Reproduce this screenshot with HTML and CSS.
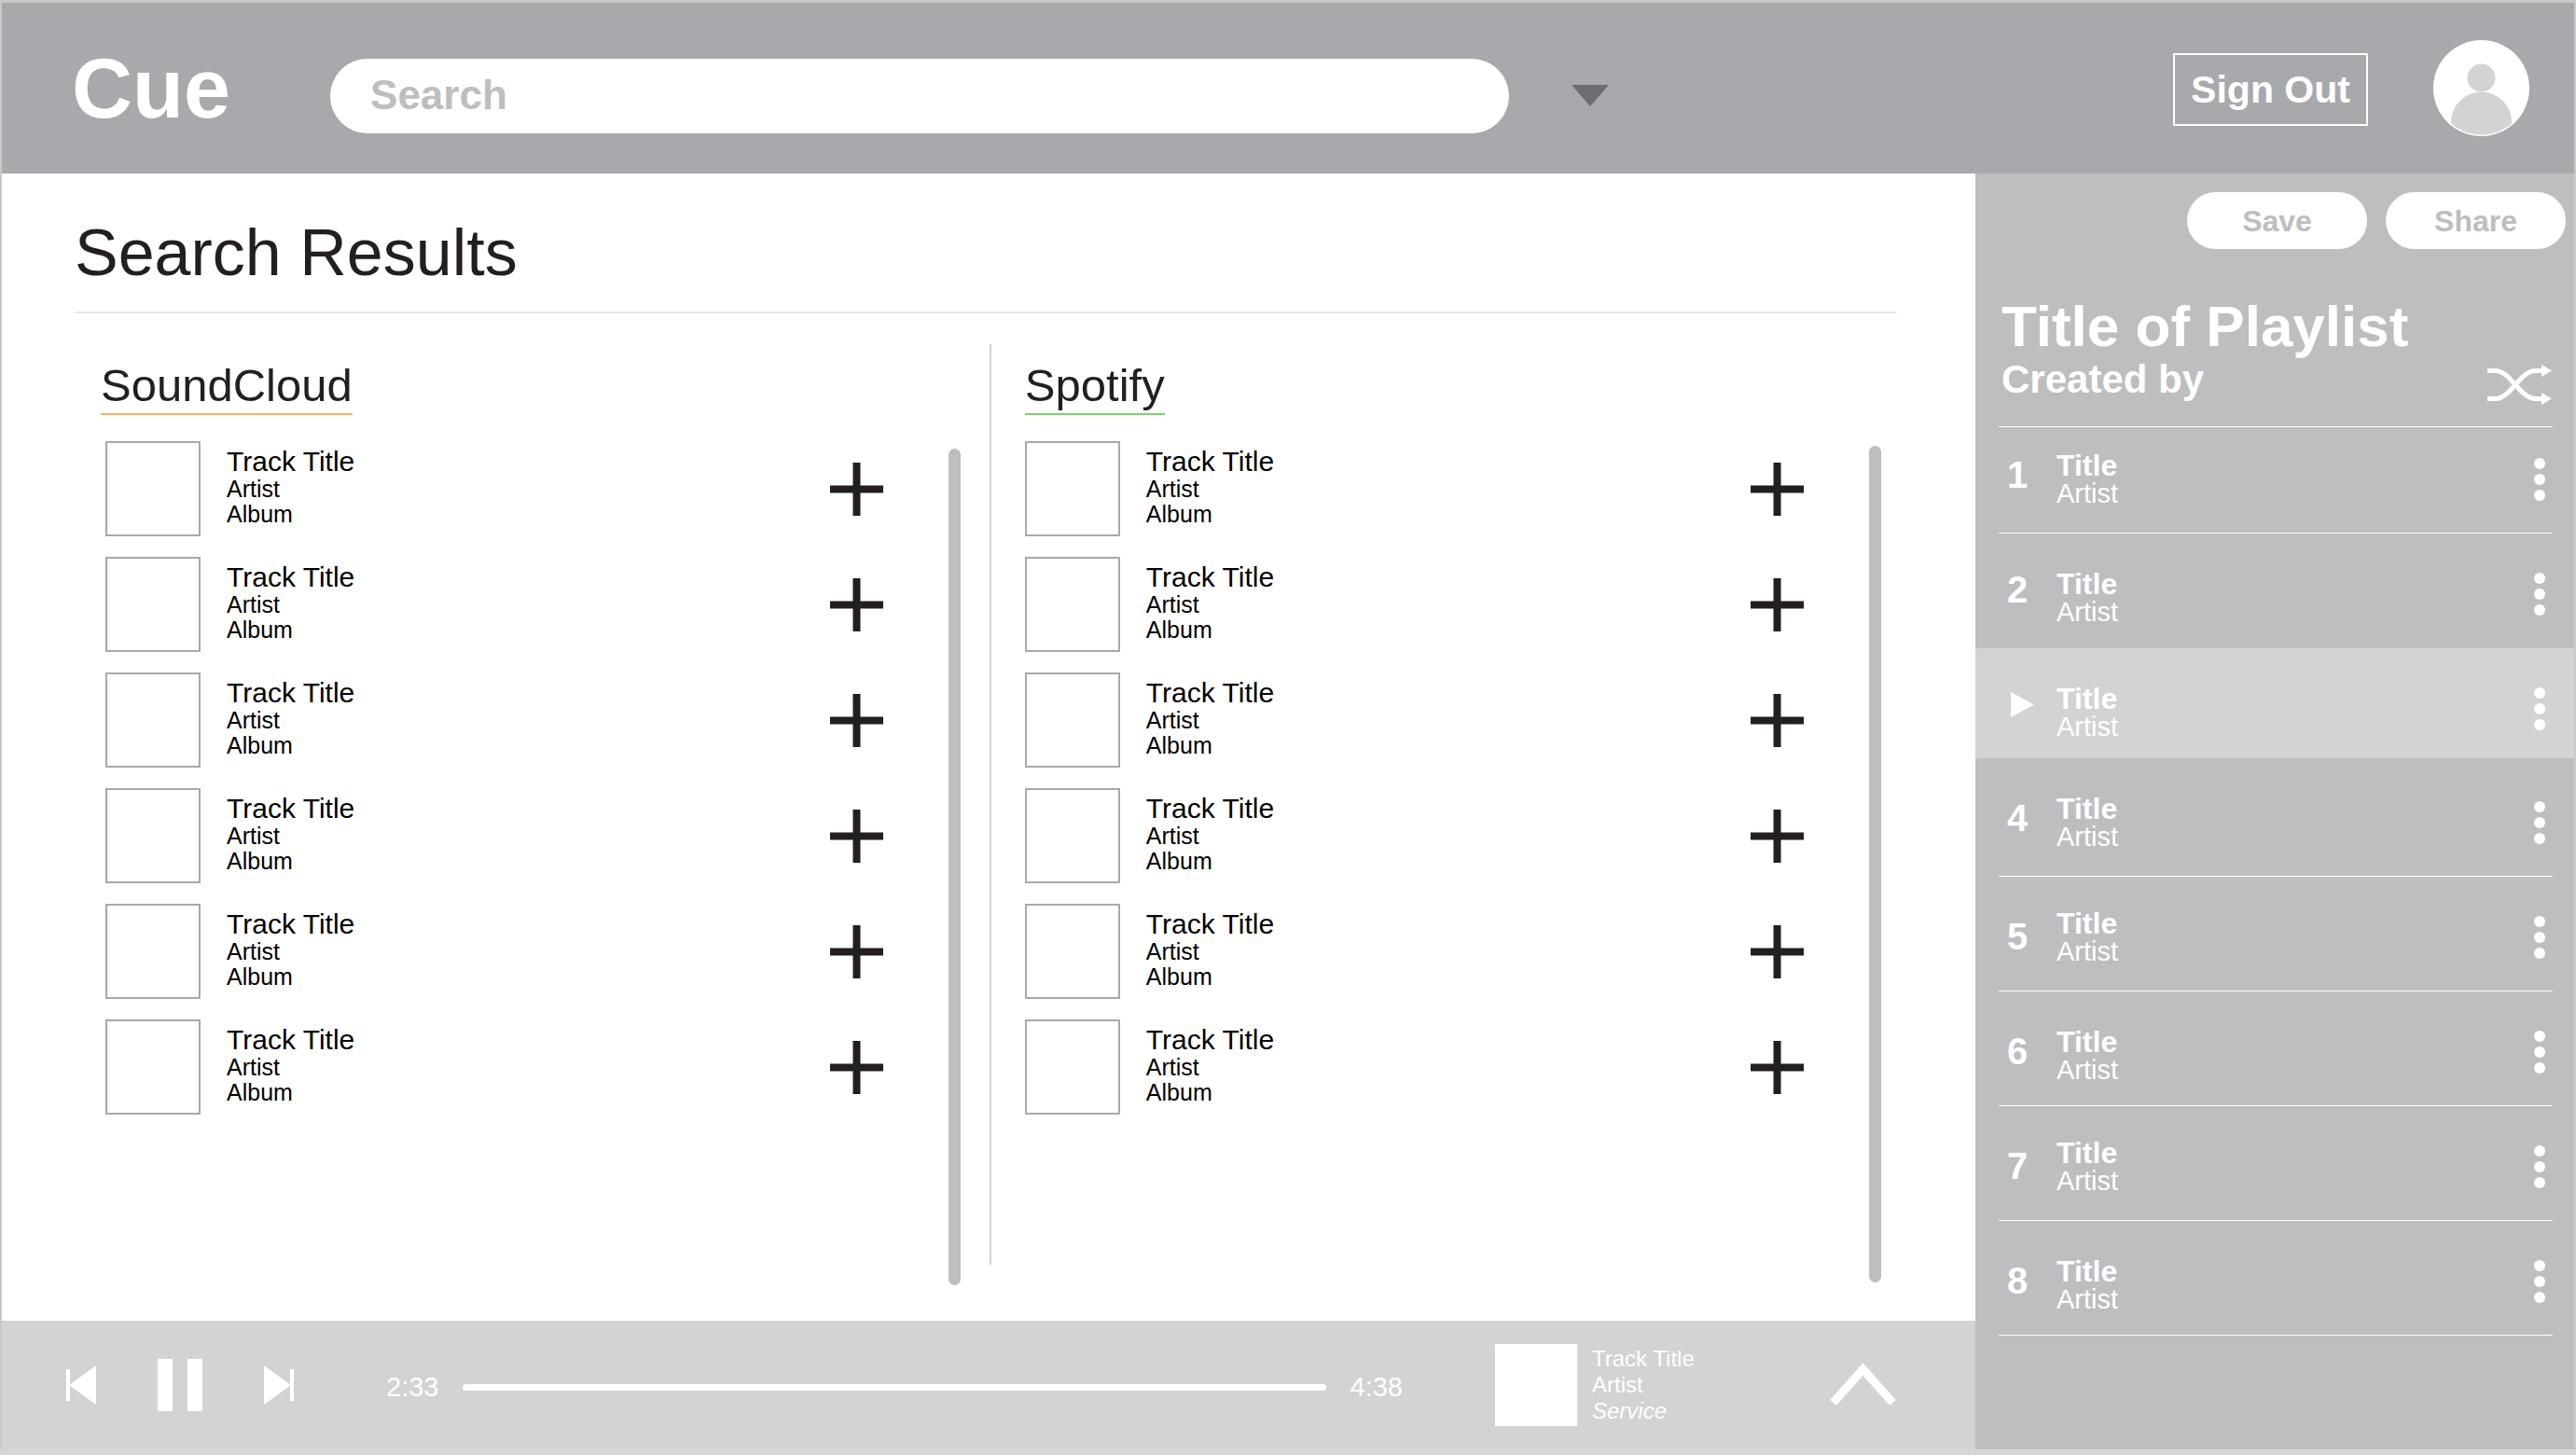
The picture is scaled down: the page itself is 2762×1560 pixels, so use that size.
FILE: index.html
```html
<!DOCTYPE html>
<html lang="en">
<head>
<meta charset="utf-8">
<meta name="viewport" content="width=device-width, initial-scale=1">
<title>Cue</title>
<link rel="stylesheet" href="styles.css">
</head>
<body>
<svg class="sprite" aria-hidden="true">
  <symbol id="plus" viewBox="0 0 57 57"><path d="M28.5 0V57M0 28.5H57" stroke="currentColor" stroke-width="8"/></symbol>
  <symbol id="dots" viewBox="0 0 12 46"><circle cx="6" cy="6" r="6"/><circle cx="6" cy="23" r="6"/><circle cx="6" cy="40" r="6"/></symbol>
</svg>
<div class="app">
  <header class="topbar">
    <a class="logo" href="#">Cue</a>
    <form class="search" role="search">
      <input class="search-input" type="text" placeholder="Search" aria-label="Search">
      <button class="icon-button" type="button" aria-label="Search options">
        <svg class="icon-caret" width="40" height="23" viewBox="0 0 40 23"><path d="M0 0H40L20 23Z"/></svg>
      </button>
    </form>
    <button class="sign-out" type="button">Sign Out</button>
    <a class="avatar" href="#" aria-label="Profile">
      <svg width="103" height="103" viewBox="0 0 103 103">
        <defs><clipPath id="face"><circle cx="51.5" cy="51.5" r="50"/></clipPath></defs>
        <circle cx="51.5" cy="51.5" r="51.5" fill="#fff"/>
        <g fill="#d1d3d4" clip-path="url(#face)"><circle cx="51.5" cy="40.500" r="15"/><path d="M19 103V88a32.500 32.500 0 0 1 65 0V103Z"/></g>
      </svg>
    </a>
  </header>

  <main class="results">
    <h1 class="page-title">Search Results</h1>
    <div class="sources">
      <section class="source source-soundcloud">
        <h2 class="source-name">SoundCloud</h2>
        <div class="source-body">
          <ul class="tracks">
            <li class="track"><div class="cover"></div><div class="track-info"><p class="track-title">Track Title</p><p>Artist</p><p>Album</p></div><button class="icon-button" type="button" aria-label="Add track"><svg width="57" height="57"><use href="#plus"/></svg></button></li>
            <li class="track"><div class="cover"></div><div class="track-info"><p class="track-title">Track Title</p><p>Artist</p><p>Album</p></div><button class="icon-button" type="button" aria-label="Add track"><svg width="57" height="57"><use href="#plus"/></svg></button></li>
            <li class="track"><div class="cover"></div><div class="track-info"><p class="track-title">Track Title</p><p>Artist</p><p>Album</p></div><button class="icon-button" type="button" aria-label="Add track"><svg width="57" height="57"><use href="#plus"/></svg></button></li>
            <li class="track"><div class="cover"></div><div class="track-info"><p class="track-title">Track Title</p><p>Artist</p><p>Album</p></div><button class="icon-button" type="button" aria-label="Add track"><svg width="57" height="57"><use href="#plus"/></svg></button></li>
            <li class="track"><div class="cover"></div><div class="track-info"><p class="track-title">Track Title</p><p>Artist</p><p>Album</p></div><button class="icon-button" type="button" aria-label="Add track"><svg width="57" height="57"><use href="#plus"/></svg></button></li>
            <li class="track"><div class="cover"></div><div class="track-info"><p class="track-title">Track Title</p><p>Artist</p><p>Album</p></div><button class="icon-button" type="button" aria-label="Add track"><svg width="57" height="57"><use href="#plus"/></svg></button></li>
          </ul>
          <div class="scrollbar"></div>
        </div>
      </section>
      <div class="divider"></div>
      <section class="source source-spotify">
        <h2 class="source-name">Spotify</h2>
        <div class="source-body">
          <ul class="tracks">
            <li class="track"><div class="cover"></div><div class="track-info"><p class="track-title">Track Title</p><p>Artist</p><p>Album</p></div><button class="icon-button" type="button" aria-label="Add track"><svg width="57" height="57"><use href="#plus"/></svg></button></li>
            <li class="track"><div class="cover"></div><div class="track-info"><p class="track-title">Track Title</p><p>Artist</p><p>Album</p></div><button class="icon-button" type="button" aria-label="Add track"><svg width="57" height="57"><use href="#plus"/></svg></button></li>
            <li class="track"><div class="cover"></div><div class="track-info"><p class="track-title">Track Title</p><p>Artist</p><p>Album</p></div><button class="icon-button" type="button" aria-label="Add track"><svg width="57" height="57"><use href="#plus"/></svg></button></li>
            <li class="track"><div class="cover"></div><div class="track-info"><p class="track-title">Track Title</p><p>Artist</p><p>Album</p></div><button class="icon-button" type="button" aria-label="Add track"><svg width="57" height="57"><use href="#plus"/></svg></button></li>
            <li class="track"><div class="cover"></div><div class="track-info"><p class="track-title">Track Title</p><p>Artist</p><p>Album</p></div><button class="icon-button" type="button" aria-label="Add track"><svg width="57" height="57"><use href="#plus"/></svg></button></li>
            <li class="track"><div class="cover"></div><div class="track-info"><p class="track-title">Track Title</p><p>Artist</p><p>Album</p></div><button class="icon-button" type="button" aria-label="Add track"><svg width="57" height="57"><use href="#plus"/></svg></button></li>
          </ul>
          <div class="scrollbar"></div>
        </div>
      </section>
    </div>
  </main>

  <aside class="playlist">
    <div class="playlist-actions">
      <button class="pill" type="button">Save</button>
      <button class="pill" type="button">Share</button>
    </div>
    <div class="playlist-head">
      <h2 class="playlist-title">Title of Playlist</h2>
      <div class="playlist-meta">
        <p class="playlist-author">Created by</p>
        <button class="icon-button shuffle" type="button" aria-label="Shuffle">
          <svg width="69" height="43" viewBox="0 0 69 43">
            <path d="M0 6.500H8C26 6.500 34 36.500 52 36.500H59M0 36.500H8C26 36.500 34 6.500 52 6.500H59" fill="none" stroke="currentColor" stroke-width="5"/>
            <path d="M58 0L69 6.500L58 13ZM58 30L69 36.500L58 43Z"/>
          </svg>
        </button>
      </div>
    </div>
    <ol class="songs">
      <li class="song song-first"><span class="song-number number-high">1</span><div class="song-info info-high"><p class="song-title">Title</p><p class="song-artist">Artist</p></div><button class="icon-button more" type="button" aria-label="More"><svg width="12" height="46"><use href="#dots"/></svg></button></li>
      <li class="song song-before-active"><span class="song-number number-high">2</span><div class="song-info"><p class="song-title">Title</p><p class="song-artist">Artist</p></div><button class="icon-button more" type="button" aria-label="More"><svg width="12" height="46"><use href="#dots"/></svg></button></li>
      <li class="song song-active"><span class="song-number number-playing"><svg width="25" height="27" viewBox="0 0 25 27"><path d="M0 0L25 13.500L0 27Z"/></svg></span><div class="song-info"><p class="song-title">Title</p><p class="song-artist">Artist</p></div><button class="icon-button more" type="button" aria-label="More"><svg width="12" height="46"><use href="#dots"/></svg></button></li>
      <li class="song song-after-active"><span class="song-number number-high">4</span><div class="song-info info-high"><p class="song-title">Title</p><p class="song-artist">Artist</p></div><button class="icon-button more" type="button" aria-label="More"><svg width="12" height="46"><use href="#dots"/></svg></button></li>
      <li class="song"><span class="song-number">5</span><div class="song-info info-high"><p class="song-title">Title</p><p class="song-artist">Artist</p></div><button class="icon-button more" type="button" aria-label="More"><svg width="12" height="46"><use href="#dots"/></svg></button></li>
      <li class="song"><span class="song-number">6</span><div class="song-info"><p class="song-title">Title</p><p class="song-artist">Artist</p></div><button class="icon-button more" type="button" aria-label="More"><svg width="12" height="46"><use href="#dots"/></svg></button></li>
      <li class="song"><span class="song-number">7</span><div class="song-info info-high"><p class="song-title">Title</p><p class="song-artist">Artist</p></div><button class="icon-button more" type="button" aria-label="More"><svg width="12" height="46"><use href="#dots"/></svg></button></li>
      <li class="song"><span class="song-number">8</span><div class="song-info"><p class="song-title">Title</p><p class="song-artist">Artist</p></div><button class="icon-button more" type="button" aria-label="More"><svg width="12" height="46"><use href="#dots"/></svg></button></li>
    </ol>
  </aside>

  <footer class="player">
    <div class="controls">
      <button class="icon-button" type="button" aria-label="Previous"><svg width="32" height="42" viewBox="0 0 32 42"><path d="M0 4H4V38H0ZM32 0V42L3 21Z"/></svg></button>
      <button class="icon-button" type="button" aria-label="Pause"><svg width="48" height="56" viewBox="0 0 48 56"><path d="M0 0H16V56H0ZM32 0H48V56H32Z"/></svg></button>
      <button class="icon-button" type="button" aria-label="Next"><svg width="32" height="42" viewBox="0 0 32 42"><path d="M28 4H32V38H28ZM0 0V42L29 21Z"/></svg></button>
    </div>
    <div class="timeline">
      <span>2:33</span>
      <input class="seek" type="range" min="0" max="278" value="153" aria-label="Position">
      <span>4:38</span>
    </div>
    <div class="now-playing">
      <div class="now-cover"></div>
      <div class="now-info"><p>Track Title</p><p>Artist</p><p><em>Service</em></p></div>
    </div>
    <button class="icon-button" type="button" aria-label="Expand player"><svg width="71" height="48" viewBox="0 0 71 48"><path d="M3.500 43L35.500 7L67.500 43" fill="none" stroke="currentColor" stroke-width="9"/></svg></button>
  </footer>
</div>
</body>
</html>
```

FILE: styles.css
```css
* {
  box-sizing: border-box;
}

body {
  margin: 0;
  background: #d6d6d6;
  color: #000;
  font-family: "Liberation Sans", Arial, sans-serif;
}

h1, h2, p, ul, ol {
  margin: 0;
  padding: 0;
  font-weight: normal;
}

ul, ol {
  list-style: none;
}

button {
  font: inherit;
  cursor: pointer;
}

svg {
  display: block;
  fill: currentColor;
}

.sprite {
  display: none;
}

.icon-button {
  flex: none;
  padding: 0;
  border: 0;
  background: none;
  color: inherit;
}

.app {
  display: grid;
  grid-template: "topbar topbar" auto "results playlist" 1fr "player playlist" auto / minmax(0, 1fr) 642px;
  min-height: calc(100vh - 6px);
  border: solid #c8c9c9;
  border-width: 3px 2px 0;
  background: #fff;
  box-shadow: 0 2px 6px #aaa;
}

/* Top bar */
.topbar {
  grid-area: topbar;
  display: flex;
  align-items: center;
  min-height: 183px;
  padding: 0 48px 0 75px;
  background: #a7a9ac;
  color: #fff;
}

.logo {
  color: #fff;
  font-size: 90px;
  font-weight: bold;
  line-height: 100px;
  text-decoration: none;
}

.search {
  display: flex;
  flex: 0 1 1371px;
  align-items: center;
  gap: 67px;
  margin: 16px 40px 0 107px;
}

.search-input {
  flex: 1;
  min-width: 0;
  height: 80px;
  padding: 0 43px 2px;
  border: 0;
  border-radius: 40px;
  background: #fff;
  color: #6d6e71;
  font: bold 44px "Liberation Sans", Arial, sans-serif;
}

.search-input::placeholder {
  color: #bcbec0;
  opacity: 1;
}

.icon-caret {
  color: #6d6e71;
}

.sign-out {
  flex: none;
  width: 209px;
  height: 78px;
  margin-top: 2px;
  margin-left: auto;
  padding: 0;
  border: 2px solid #fff;
  background: none;
  color: #fff;
  font-size: 41px;
  font-weight: bold;
  line-height: 46px;
}

.avatar {
  margin-left: 70px;
}

/* Search results */
.results {
  grid-area: results;
  display: flex;
  flex-direction: column;
  padding: 45px 84px 38px 78px;
}

.page-title {
  padding-bottom: 23px;
  border-bottom: 2px solid #e6e7e8;
  color: #231f20;
  font-size: 70px;
  line-height: 80px;
}

.sources {
  display: grid;
  flex: 1;
  grid-template-columns: 101fr 2px 100fr;
  margin-top: 33px;
}

.divider {
  margin-bottom: 22px;
  background: #d1d3d4;
}

.source {
  display: flex;
  flex-direction: column;
  align-items: flex-start;
  padding-top: 16px;
}

.source-soundcloud {
  padding-right: 31px;
  padding-left: 28px;
}

.source-spotify {
  padding-right: 17px;
  padding-left: 36px;
}

.source-name {
  padding-bottom: 2px;
  border-bottom: 2px solid;
  color: #231f20;
  font-size: 49px;
  line-height: 56px;
}

.source-soundcloud .source-name {
  border-color: #f3b860;
}

.source-spotify .source-name {
  border-color: #7dd06c;
}

.source-body {
  display: flex;
  flex: 1;
  align-self: stretch;
  gap: 70px;
  margin-top: 28px;
}

.source-soundcloud .source-body {
  padding-left: 5px;
}

.tracks {
  display: flex;
  flex: 1;
  flex-direction: column;
  gap: 22px;
}

.track {
  display: flex;
  align-items: center;
  min-height: 102px;
  color: #231f20;
}

.cover {
  width: 102px;
  height: 102px;
  border: 2px solid #a7a9ac;
}

.track-info {
  flex: 1;
  align-self: flex-start;
  padding: 6px 28px 0;
  color: #000;
  font-size: 25px;
  line-height: 27px;
}

.track-title {
  font-size: 30px;
  line-height: 32px;
}

.scrollbar {
  width: 13px;
  border-radius: 7px;
  background: #bcbec0;
}

.source-soundcloud .scrollbar {
  margin-top: 8px;
}

.source-spotify .scrollbar {
  margin: 5px 0 3px;
}

/* Playlist */
.playlist {
  grid-area: playlist;
  padding-top: 20px;
  background: #bcbec0;
  color: #fff;
}

.playlist-actions {
  display: flex;
  justify-content: flex-end;
  gap: 20px;
  padding-right: 9px;
}

.pill {
  width: 193px;
  height: 61px;
  padding: 2px 0 0;
  border: 0;
  border-radius: 31px;
  background: #fff;
  color: #bcbec0;
  font-size: 32px;
  font-weight: bold;
}

.playlist-head {
  padding: 50px 24px 23px 28px;
}

.playlist-title {
  font-size: 62px;
  font-weight: bold;
  line-height: 66px;
}

.playlist-meta {
  display: flex;
  justify-content: space-between;
}

.playlist-author {
  font-size: 42px;
  font-weight: bold;
  line-height: 48px;
}

.shuffle {
  padding-top: 8px;
}

.songs::before {
  content: "";
  display: block;
  height: 1px;
  margin: 0 23px 0 25px;
  background: #fff;
}

.song {
  display: flex;
  align-items: flex-end;
  min-height: 123px;
  margin: 0 23px 0 25px;
  padding: 0 8px 23px 9px;
  border-bottom: 1px solid #fff;
}

.song-first {
  min-height: 114px;
}

.song-before-active {
  border-bottom-color: transparent;
}

.song-active {
  min-height: 118px;
  margin: 0;
  padding: 0 31px 19px 34px;
  border-bottom: 0;
  background: #d1d3d4;
}

.song-after-active {
  min-height: 127px;
}

.song-number {
  width: 53px;
  margin-bottom: 15px;
  font-size: 40px;
  font-weight: bold;
  line-height: 40px;
}

.number-high {
  margin-bottom: 19px;
}

.number-playing {
  margin-bottom: 25px;
  padding-left: 4px;
}

.song-info {
  flex: 1;
}

.info-high {
  margin-bottom: 4px;
}

.song-title {
  font-size: 32px;
  font-weight: bold;
  line-height: 31px;
}

.song-artist {
  font-size: 29px;
  line-height: 29px;
}

.more {
  margin-bottom: 11px;
}

/* Player */
.player {
  grid-area: player;
  display: flex;
  align-items: center;
  min-height: 138px;
  padding: 0 85px 0 69px;
  background: #d1d3d4;
  color: #fff;
}

.controls {
  display: flex;
  align-items: center;
  gap: 66px;
}

.timeline {
  display: flex;
  flex: 1;
  align-items: center;
  gap: 26px;
  padding: 4px 99px 0 99px;
  font-size: 29px;
  line-height: 32px;
}

.seek {
  flex: 1;
  min-width: 0;
  height: 7px;
  margin: 0;
  border-radius: 4px;
  background: #fff;
  appearance: none;
}

.seek::-webkit-slider-thumb {
  width: 7px;
  height: 7px;
  appearance: none;
}

.now-playing {
  display: flex;
  align-items: center;
  gap: 16px;
}

.now-cover {
  width: 88px;
  height: 88px;
  background: #fff;
}

.now-info {
  width: 255px;
  font-size: 24px;
  line-height: 28px;
}
```
